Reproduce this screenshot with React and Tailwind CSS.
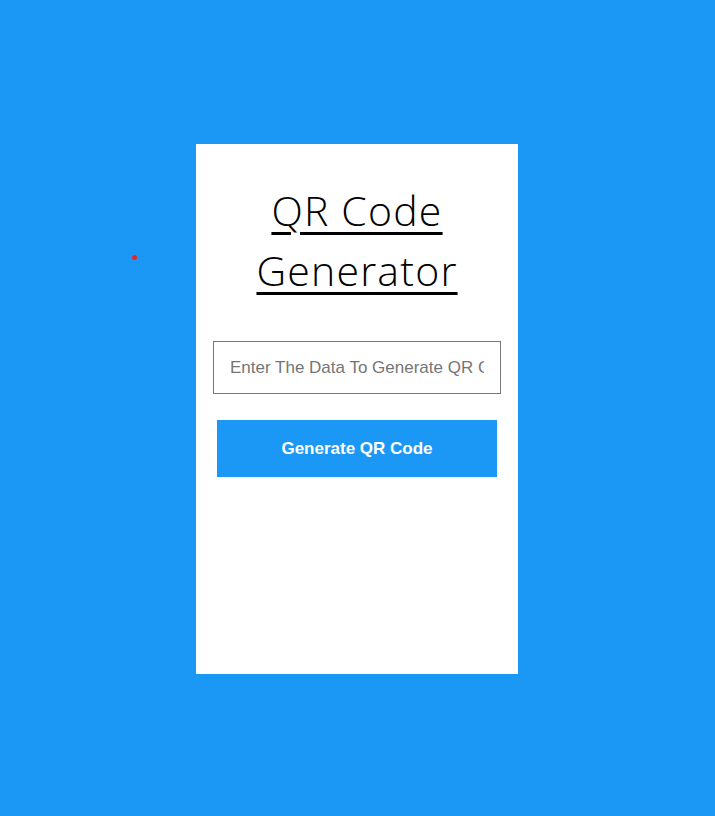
export default function App() {
  return (
    <div className="relative min-h-[816px] w-full bg-[#1b98f5] flex items-center justify-center pr-px pt-[2px]">
      <div className="absolute left-[132px] top-[255px] w-[5px] h-[5px] rounded-full bg-[#e8232b]" />
      <div className="w-[322px] h-[530px] bg-white flex flex-col items-center pt-[36px]">
        <h1 className="font-['Open_Sans',sans-serif] text-[41px] leading-[60px] tracking-[1.2px] font-light text-black text-center underline underline-offset-[6px] decoration-[3px] px-[36px]">
          QR Code Generator
        </h1>
        <input
          type="text"
          placeholder="Enter The Data To Generate QR Code"
          className="font-['Liberation_Sans',Arial,sans-serif] mt-[41px] w-[288px] h-[53px] border border-[#767676] px-[16px] text-[17px] text-black placeholder:text-[#757575] outline-none"
        />
        <button className="font-['Liberation_Sans',Arial,sans-serif] mt-[26px] w-[280px] h-[57px] bg-[#1b98f5] text-white font-bold text-[17px]">
          Generate QR Code
        </button>
      </div>
    </div>
  );
}
